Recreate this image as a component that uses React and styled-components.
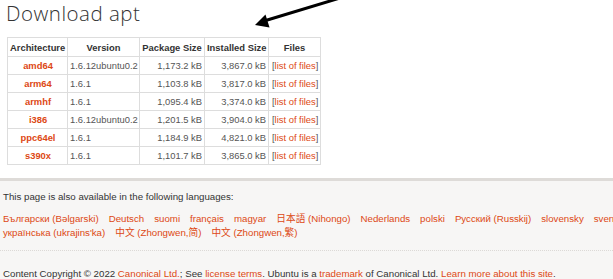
import React from "react";
import styled, { createGlobalStyle } from "styled-components";

const GlobalStyle = createGlobalStyle`
  html, body {
    margin: 0;
    padding: 0;
    background: #ffffff;
    overflow: hidden;
  }
  body {
    font-family: "Liberation Sans", Arial, sans-serif;
    color: #333333;
  }
`;

const Page = styled.div`
  width: 680px;
  min-height: 279px;
`;

const Main = styled.div`
  position: relative;
  padding: 2px 0 13px 6px;
`;

const Title = styled.h1`
  margin: 0;
  font-family: "Open Sans", "Liberation Sans", sans-serif;
  font-weight: 300;
  font-size: 20.5px;
  line-height: 22px;
  color: #333333;
  letter-spacing: 0.5px;
`;

const Arrow = styled.svg`
  position: absolute;
  top: 0;
  left: 250px;
  width: 100px;
  height: 30px;
  overflow: visible;
`;

const PkgTable = styled.table`
  margin: 13px 0 0 1px;
  border-collapse: collapse;
  table-layout: fixed;
  width: 314px;
  font-size: 9.4px;
`;

const Col = styled.col`
  width: ${(p) => p.$w}px;
`;

const Th = styled.th`
  border: 1px solid #dddddd;
  height: 18px;
  padding: 0 2px;
  font-weight: bold;
  color: #333333;
  text-align: center;
  white-space: nowrap;
`;

const Td = styled.td`
  border: 1px solid #dddddd;
  height: 17px;
  padding: 0 2px 0 ${(p) => (p.$tight ? 2 : 3)}px;
  color: #555555;
  white-space: nowrap;
  text-align: ${(p) => p.$align || "left"};
  font-weight: ${(p) => (p.$bold ? "bold" : "normal")};
`;

const Link = styled.a`
  color: #dd4814;
  text-decoration: none;
`;

const Footer = styled.footer`
  border-top: 3px solid #dedbd8;
  background: #f7f6f5;
  padding: 9px 3px 4px;
  font-size: 9.7px;
  color: #333333;
`;

const Note = styled.p`
  margin: 0;
  line-height: 14px;
`;

const Langs = styled.div`
  display: flex;
  flex-wrap: wrap;
  column-gap: 10px;
  margin-top: 8px;
  line-height: 14px;
  font-family: "Liberation Sans", "Noto Sans CJK SC", sans-serif;
`;

const Divider = styled.hr`
  margin: 10px 0 0 -3px;
  border: 0;
  border-top: 1px dotted #dcd9d6;
`;

const Copyright = styled.p`
  margin: 16px 0 0;
  line-height: 14px;
`;

const rows = [
  ["amd64", "1.6.12ubuntu0.2", "1,173.2 kB", "3,867.0 kB"],
  ["arm64", "1.6.1", "1,103.8 kB", "3,817.0 kB"],
  ["armhf", "1.6.1", "1,095.4 kB", "3,374.0 kB"],
  ["i386", "1.6.12ubuntu0.2", "1,201.5 kB", "3,904.0 kB"],
  ["ppc64el", "1.6.1", "1,184.9 kB", "4,821.0 kB"],
  ["s390x", "1.6.1", "1,101.7 kB", "3,865.0 kB"],
];

const languages = [
  "Български (Bəlgarski)",
  "Deutsch",
  "suomi",
  "français",
  "magyar",
  "日本語 (Nihongo)",
  "Nederlands",
  "polski",
  "Русский (Russkij)",
  "slovensky",
  "svenska",
  "українська (ukrajins'ka)",
  "中文 (Zhongwen,简)",
  "中文 (Zhongwen,繁)",
];

export default function App() {
  return (
    <Page>
      <GlobalStyle />
      <Main>
        <Title>Download apt</Title>
        <Arrow viewBox="0 0 100 30">
          <line x1="90" y1="-2" x2="14" y2="21" stroke="#000" strokeWidth="3" strokeLinecap="round" />
          <polygon points="5,25 19.5,27.5 15.5,14.5" fill="#000" />
        </Arrow>
        <PkgTable>
          <colgroup>
            <Col $w={60} />
            <Col $w={72} />
            <Col $w={65} />
            <Col $w={64} />
            <Col $w={52} />
          </colgroup>
          <thead>
            <tr>
              <Th>Architecture</Th>
              <Th>Version</Th>
              <Th>Package Size</Th>
              <Th>Installed Size</Th>
              <Th>Files</Th>
            </tr>
          </thead>
          <tbody>
            {rows.map(([arch, ver, pkg, inst]) => (
              <tr key={arch}>
                <Td $align="center" $bold>
                  <Link href="#">{arch}</Link>
                </Td>
                <Td $tight>{ver}</Td>
                <Td $align="right">{pkg}</Td>
                <Td $align="right">{inst}</Td>
                <Td $align="center">
                  [<Link href="#">list of files</Link>]
                </Td>
              </tr>
            ))}
          </tbody>
        </PkgTable>
      </Main>
      <Footer>
        <Note>This page is also available in the following languages:</Note>
        <Langs>
          {languages.map((l) => (
            <Link href="#" key={l}>
              {l}
            </Link>
          ))}
        </Langs>
        <Divider />
        <Copyright>
          Content Copyright © 2022 <Link href="#">Canonical Ltd.</Link>; See{" "}
          <Link href="#">license terms</Link>. Ubuntu is a <Link href="#">trademark</Link> of
          Canonical Ltd. <Link href="#">Learn more about this site</Link>.
        </Copyright>
      </Footer>
    </Page>
  );
}
